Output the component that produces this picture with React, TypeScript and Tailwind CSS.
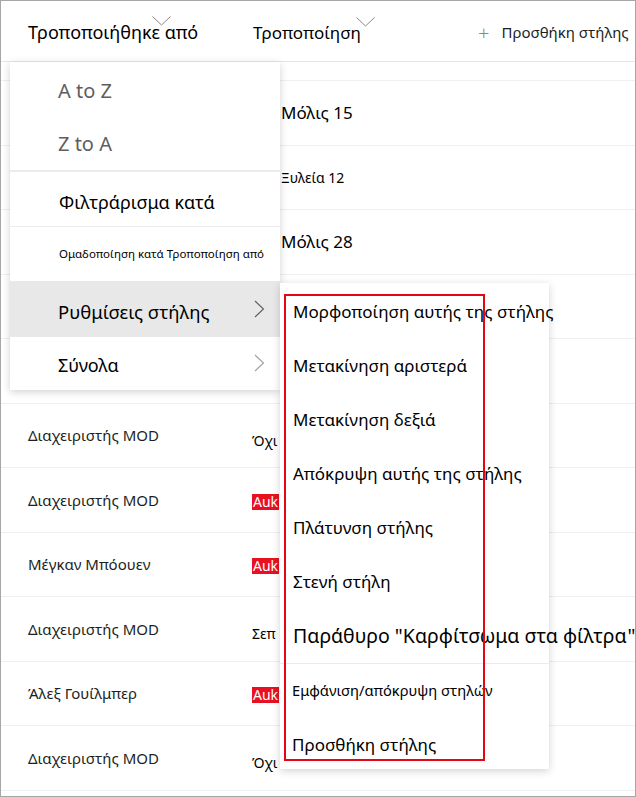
const font = { fontFamily: '"Noto Sans", "Open Sans", sans-serif' }

interface Row {
  name: string
  value: string
  kind: 'big' | 'plain' | 'red' | 'none'
  indent?: boolean
}

const rows: Row[] = [
  { name: '', value: 'Μόλις 15', kind: 'big' },
  { name: '', value: 'Ξυλεία 12', kind: 'plain', indent: true },
  { name: '', value: 'Μόλις 28', kind: 'big' },
  { name: '', value: '', kind: 'none' },
  { name: '', value: '', kind: 'none' },
  { name: 'Διαχειριστής MOD', value: 'Όχι', kind: 'plain' },
  { name: 'Διαχειριστής MOD', value: 'Auk', kind: 'red' },
  { name: 'Μέγκαν Μπόουεν', value: 'Auk', kind: 'red' },
  { name: 'Διαχειριστής MOD', value: 'Σεπ', kind: 'plain' },
  { name: 'Άλεξ Γουίλμπερ', value: 'Auk', kind: 'red' },
  { name: 'Διαχειριστής MOD', value: 'Όχι', kind: 'plain' },
]

function DownChevron() {
  return (
    <svg width="19" height="10" viewBox="0 0 19 10">
      <path d="M0.5 0.5 L9.5 9 L18.5 0.5" fill="none" stroke="#8a8886" strokeWidth="1" />
    </svg>
  )
}

function SideChevron({ color }: { color: string }) {
  return (
    <svg width="11" height="18" viewBox="0 0 11 18" className="mt-[-6px]">
      <path d="M1 1 L9.5 9 L1 17" fill="none" stroke={color} strokeWidth="1.1" />
    </svg>
  )
}

function ValueCell({ row }: { row: Row }) {
  if (row.kind === 'big') return <span className="ml-[31px] text-[17px] text-black">{row.value}</span>
  if (row.kind === 'red')
    return <span className="ml-[2px] mt-[4px] bg-[#e81123] px-[1px] text-[14px] leading-[16px] text-white">{row.value}</span>
  if (row.kind === 'plain')
    return (
      <span className={`${row.indent ? 'ml-[31px] text-[14px]' : 'ml-[2px] mt-[10px] text-[14px]'} text-black`}>{row.value}</span>
    )
  return null
}

export default function App() {
  return (
    <div style={font} className="relative h-[797px] w-[636px] overflow-hidden border border-[#a6a6a6] bg-white">
      <div className="flex h-[61px] items-center border-b border-[#e6e6e6] pt-[3px] text-black">
        <div className="relative ml-[27px] w-[225px]">
          <span className="relative text-[18px]">
            Τροποποιήθηκε από
            <span className="absolute left-[124px] top-[-4px]">
              <DownChevron />
            </span>
          </span>
        </div>
        <div className="relative w-[225px]">
          <span className="relative text-[17px]">
            Τροποποίηση
            <span className="absolute right-[-14px] top-[-4px]">
              <DownChevron />
            </span>
          </span>
        </div>
        <div className="flex items-center gap-[12px] text-[15px] text-[#201f1e]">
          <span className="text-[20px] font-light leading-none text-[#8a8886]">+</span>
          <span>Προσθήκη στήλης</span>
        </div>
      </div>
      <div className="h-[19px] border-b border-[#efefef]" />
      {rows.map((row, i) => (
        <div key={i} className="flex h-[64.5px] items-center border-b border-[#efefef]">
          <div className="w-[249px] pl-[27px] text-[15px] text-[#201f1e]">{row.name}</div>
          <div className="flex items-center">
            <ValueCell row={row} />
          </div>
        </div>
      ))}

      <div className="absolute left-[9px] top-[61px] w-[270px] bg-white shadow-[0_2px_8px_rgba(0,0,0,0.18)]">
        <div className="flex h-[56px] items-center pl-[48px] pt-[2px] text-[20px] text-[#605e5c]">A to Z</div>
        <div className="flex h-[52px] items-center pl-[48px] text-[20px] text-[#605e5c]">Z to A</div>
        <div className="h-[2px] bg-[#ebebeb]" />
        <div className="flex h-[54px] items-center pl-[49px] pt-[6px] text-[18px] text-black">Φιλτράρισμα κατά</div>
        <div className="h-[1px] bg-[#ebebeb]" />
        <div className="flex h-[54px] items-center pl-[49px] text-[11.5px] text-black">Ομαδοποίηση κατά Τροποποίηση από</div>
        <div className="flex h-[56px] items-center justify-between bg-[#e8e8e8] pl-[48px] pr-[15px] pt-[6px] text-[18.5px] text-black">
          <span>Ρυθμίσεις στήλης</span>
          <SideChevron color="#605e5c" />
        </div>
        <div className="flex h-[53px] items-center justify-between pl-[48px] pr-[15px] pt-[4px] text-[18px] text-black">
          <span>Σύνολα</span>
          <SideChevron color="#a19f9d" />
        </div>
      </div>

      <div className="absolute left-[279px] top-[282px] w-[269px] bg-white pt-[2px] shadow-[0_2px_8px_rgba(0,0,0,0.18)]">
        {[
          'Μορφοποίηση αυτής της στήλης',
          'Μετακίνηση αριστερά',
          'Μετακίνηση δεξιά',
          'Απόκρυψη αυτής της στήλης',
          'Πλάτυνση στήλης',
          'Στενή στήλη',
        ].map((t) => (
          <div key={t} className="flex h-[54px] items-center whitespace-nowrap pl-[13px] text-[17px] text-black">
            {t}
          </div>
        ))}
        <div className="flex h-[54px] items-center whitespace-nowrap pl-[13px] text-[19.5px] text-black">
          Παράθυρο "Καρφίτσωμα στα φίλτρα"
        </div>
        <div className="h-[1px] bg-[#ebebeb]" />
        <div className="flex h-[53px] items-center whitespace-nowrap pl-[12px] text-[14.7px] text-black">
          Εμφάνιση/απόκρυψη στηλών
        </div>
        <div className="flex h-[52px] items-center whitespace-nowrap pl-[12px] pt-[4px] text-[17px] text-black">
          Προσθήκη στήλης
        </div>
      </div>

      <div className="absolute left-[283px] top-[293px] h-[467px] w-[201px] border-2 border-[#e30613]" />
    </div>
  )
}
